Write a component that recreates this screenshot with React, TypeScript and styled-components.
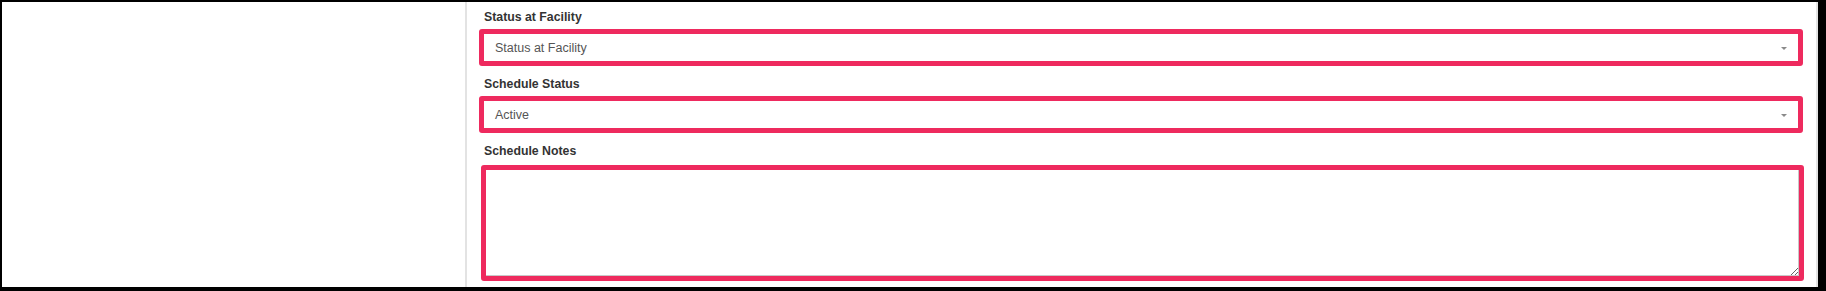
import styled, { createGlobalStyle } from 'styled-components';

const GlobalStyle = createGlobalStyle`
  html, body {
    margin: 0;
    padding: 0;
    background: #ffffff;
  }
  * {
    box-sizing: border-box;
  }
`;

const HIGHLIGHT = '#ee2a5e';

type Field = {
  label: string;
  value: string;
};

const selectFields: Field[] = [
  { label: 'Status at Facility', value: 'Status at Facility' },
  { label: 'Schedule Status', value: 'Active' },
];

function App() {
  return (
    <>
      <GlobalStyle />
      <StFrame>
        <StSideColumn />
        <StPanel>
          {selectFields.map((field) => (
            <StFieldGroup key={field.label}>
              <StLabel>{field.label}</StLabel>
              <StSelect>
                <span>{field.value}</span>
                <StCaret />
              </StSelect>
            </StFieldGroup>
          ))}
          <StFieldGroup>
            <StLabel>Schedule Notes</StLabel>
            <StTextArea aria-label="Schedule Notes" />
          </StFieldGroup>
        </StPanel>
      </StFrame>
    </>
  );
}

export default App;

const StFrame = styled.div`
  display: flex;
  width: 1826px;
  height: 291px;
  border-style: solid;
  border-color: #000000;
  border-width: 2px 8px 4px 2px;
  background: #ffffff;
  font-family: 'Liberation Sans', Arial, sans-serif;
`;

const StSideColumn = styled.div`
  flex: 0 0 463px;
`;

const StPanel = styled.div`
  flex: 1;
  display: flex;
  flex-direction: column;
  gap: 10px;
  padding: 7px 13px 0 12px;
  border-left: 2px solid #e3e3e3;
  border-right: 2px solid #e3e3e3;
`;

const StFieldGroup = styled.div`
  display: flex;
  flex-direction: column;
  gap: 3px;
`;

const StLabel = styled.label`
  padding-left: 5px;
  font-size: 12.3px;
  line-height: 17px;
  font-weight: 700;
  color: #333333;
`;

const StSelect = styled.div`
  display: flex;
  align-items: center;
  justify-content: space-between;
  height: 37px;
  padding: 0 11px 0 11px;
  border: 5px solid ${HIGHLIGHT};
  border-radius: 3px;
  background: #ffffff;
  font-size: 12.5px;
  color: #555555;
`;

const StCaret = styled.span`
  width: 0;
  height: 0;
  margin-top: 2px;
  border-left: 3px solid transparent;
  border-right: 3px solid transparent;
  border-top: 3px solid #8a8a8a;
`;

const StTextArea = styled.textarea`
  display: block;
  width: calc(100% - 1px);
  height: 116px;
  margin: 2px 0 0 2px;
  padding: 6px 10px;
  border: 5px solid ${HIGHLIGHT};
  border-radius: 3px;
  box-shadow: inset -1px -1px 0 #c8c8c8;
  background: #ffffff;
  font-family: 'Liberation Sans', Arial, sans-serif;
  font-size: 12.5px;
  color: #555555;
  resize: vertical;
  outline: none;
`;
